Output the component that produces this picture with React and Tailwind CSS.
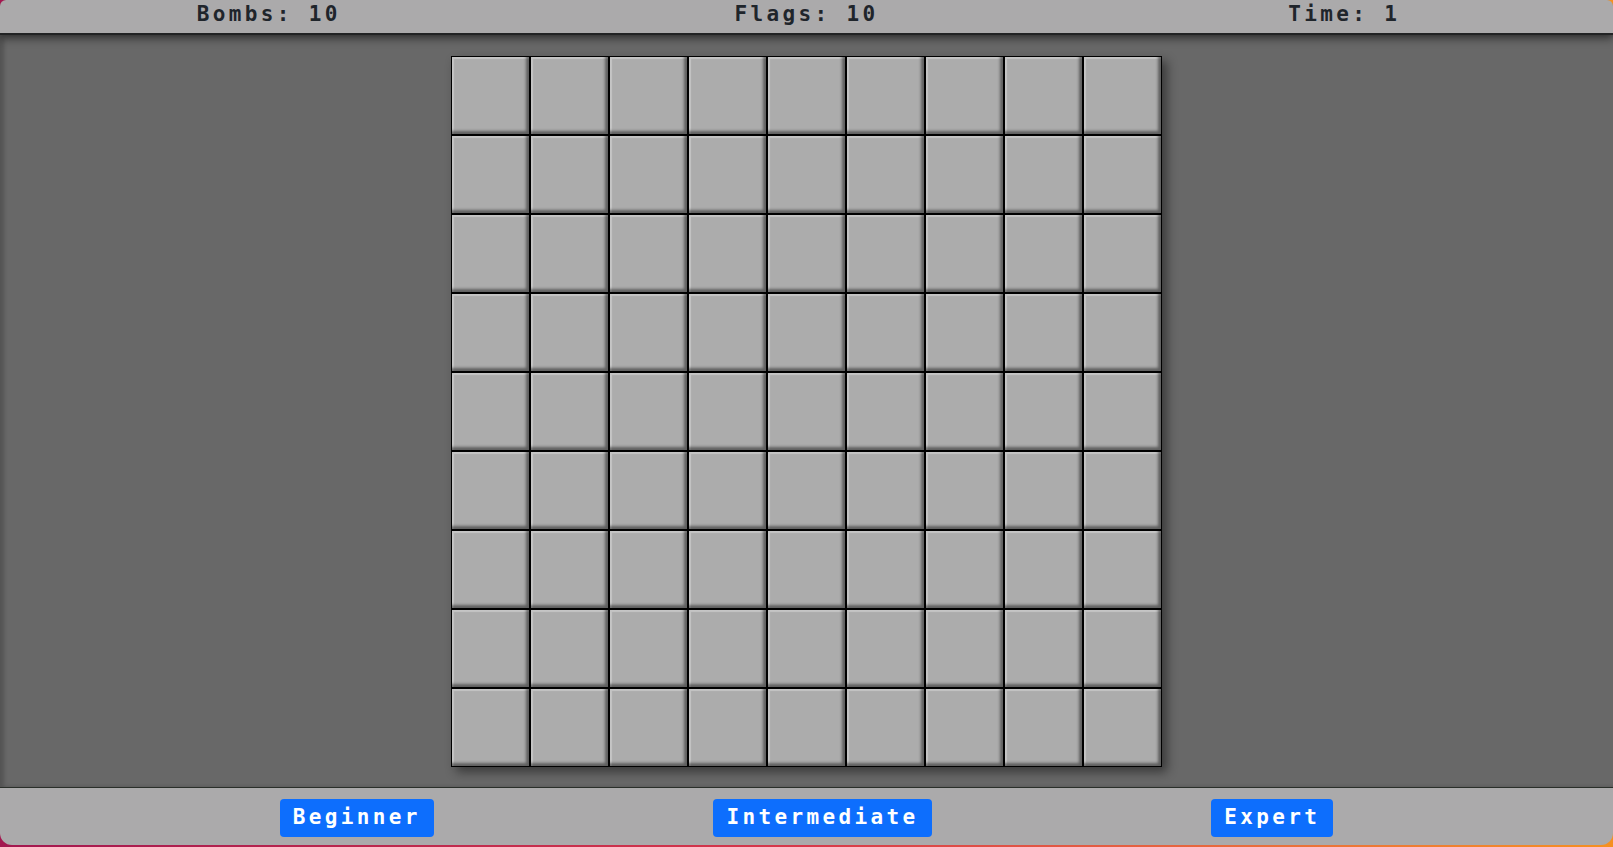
import React from 'react';

const ROWS = 9;
const COLS = 9;

function Cell() {
    return (
        <div className="w-[79px] h-[79px] border border-black bg-[#acacac] shadow-[inset_-3px_-3px_3px_rgba(0,0,0,0.45),inset_2px_2px_1px_rgba(255,255,255,0.3)]" />
    );
}

function Stat({ label, value }) {
    return (
        <div className="flex items-center justify-center">
            <span className="whitespace-pre">{label}: {value}</span>
        </div>
    );
}

function LevelButton({ children }) {
    return (
        <button className="h-[38px] px-[13px] rounded-[4px] bg-[#0d6efd] text-white whitespace-pre">
            {children}
        </button>
    );
}

export default function App() {
    const cells = Array.from({ length: ROWS * COLS });

    return (
        <div className="h-screen bg-gradient-to-r from-[#a3174f] via-[#d8384a] to-[#f59020] pb-[2px] font-['DejaVu_Sans_Mono',monospace] font-bold text-[21px] tracking-[3.36px]">
            <div className="h-full flex flex-col rounded-t-[6px] rounded-b-[12px] overflow-hidden">
                <header className="h-[35px] shrink-0 grid grid-cols-3 bg-[#abaaab] border-b-2 border-[#222324] text-[#1f252b] leading-none pb-[4px] relative z-10 shadow-[0_4px_8px_rgba(0,0,0,0.45)]">
                    <Stat label="Bombs" value={10} />
                    <Stat label="Flags" value={10} />
                    <Stat label="Time" value={1} />
                </header>

                <main className="flex-1 flex items-center justify-center bg-[#686868] shadow-[inset_4px_0_4px_rgba(0,0,0,0.2)]">
                    <div className="grid grid-cols-9 shadow-[5px_5px_10px_rgba(0,0,0,0.45)]">
                        {cells.map((_, i) => (
                            <Cell key={i} />
                        ))}
                    </div>
                </main>

                <footer className="h-[58px] shrink-0 flex items-center justify-evenly bg-[#abaaab] border-t border-[#2a2f2a] pt-[2px] leading-none">
                    <LevelButton>Beginner</LevelButton>
                    <LevelButton>Intermediate</LevelButton>
                    <LevelButton>Expert</LevelButton>
                </footer>
            </div>
        </div>
    );
}
